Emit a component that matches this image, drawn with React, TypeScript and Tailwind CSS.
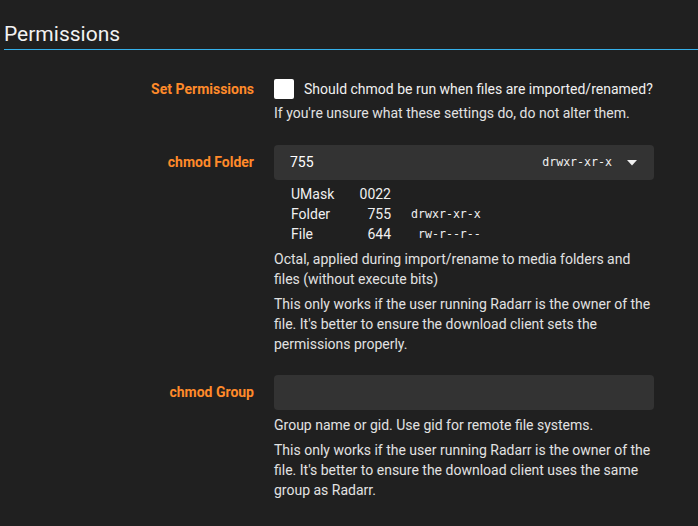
import React from "react";

const mono = { fontFamily: '"DejaVu Sans Mono", "Liberation Mono", monospace' };

function Caret() {
  return (
    <svg width="10" height="6" viewBox="0 0 10 6" className="ml-[15px]">
      <polygon points="0,0 10,0 5,5.5" fill="#f0f0f0" />
    </svg>
  );
}

function Label({ children }: { children: React.ReactNode }) {
  return (
    <div className="w-[250px] shrink-0 mr-[20px] flex justify-end font-bold text-[14px] leading-[35px] text-[#ff8a2a]">
      {children}
    </div>
  );
}

function Help({ children }: { children: React.ReactNode }) {
  return <div className="mt-[5px] text-[14px] leading-[20px] text-[#e2e2e2]">{children}</div>;
}

export default function App() {
  return (
    <div
      className="min-h-screen w-full bg-[#202020] pl-[4px] text-[#e6e6e6]"
      style={{ fontFamily: 'Roboto, "Noto Sans", "Liberation Sans", sans-serif' }}
    >
      <div className="pt-[19px]">
        <div className="text-[21px] font-normal leading-[30px] text-[#f2f2f2]">Permissions</div>
        <div className="h-[1px] bg-[#35b0ea]" />
      </div>

      {/* Set Permissions */}
      <div className="mt-[22px] flex">
        <Label>Set Permissions</Label>
        <div className="w-[380px] pt-[7px]">
          <div className="flex items-center h-[20px]">
            <div className="w-[20px] h-[20px] rounded-[2px] bg-white shrink-0" />
            <span className="ml-[10px] text-[14px] leading-[20px] text-[#f0f0f0] whitespace-nowrap">
              Should chmod be run when files are imported/renamed?
            </span>
          </div>
          <div className="mt-[4px] text-[14px] leading-[20px] text-[#e2e2e2]">
            If you're unsure what these settings do, do not alter them.
          </div>
        </div>
      </div>

      {/* chmod Folder */}
      <div className="mt-[22px] flex">
        <Label>chmod Folder</Label>
        <div className="w-[380px]">
          <div className="h-[35px] rounded-[4px] bg-[#333333] flex items-center pl-[16px] pr-[17px]">
            <span className="text-[14px] text-white flex-1">755</span>
            <span className="text-[11.6px] text-[#f0f0f0]" style={mono}>
              drwxr-xr-x
            </span>
            <Caret />
          </div>
          <div className="mt-[4px] pl-[17px] text-[14px] leading-[20px] text-[#f0f0f0]">
            <div className="flex">
              <span className="w-[60px]">UMask</span>
              <span className="w-[40px] text-right">0022</span>
            </div>
            <div className="flex items-center">
              <span className="w-[60px]">Folder</span>
              <span className="w-[40px] text-right">755</span>
              <span className="ml-[20px] text-[11.6px] whitespace-pre" style={mono}>
                drwxr-xr-x
              </span>
            </div>
            <div className="flex items-center">
              <span className="w-[60px]">File</span>
              <span className="w-[40px] text-right">644</span>
              <span className="ml-[20px] text-[11.6px] whitespace-pre" style={mono}>
                {" rw-r--r--"}
              </span>
            </div>
          </div>
          <Help>
            Octal, applied during import/rename to media folders and
            <br />
            files (without execute bits)
          </Help>
          <Help>
            This only works if the user running Radarr is the owner of the
            <br />
            file. It's better to ensure the download client sets the
            <br />
            permissions properly.
          </Help>
        </div>
      </div>

      {/* chmod Group */}
      <div className="mt-[21px] flex pb-[26px]">
        <Label>chmod Group</Label>
        <div className="w-[380px]">
          <div className="h-[35px] rounded-[4px] bg-[#333333]" />
          <Help>Group name or gid. Use gid for remote file systems.</Help>
          <Help>
            This only works if the user running Radarr is the owner of the
            <br />
            file. It's better to ensure the download client uses the same
            <br />
            group as Radarr.
          </Help>
        </div>
      </div>
    </div>
  );
}
